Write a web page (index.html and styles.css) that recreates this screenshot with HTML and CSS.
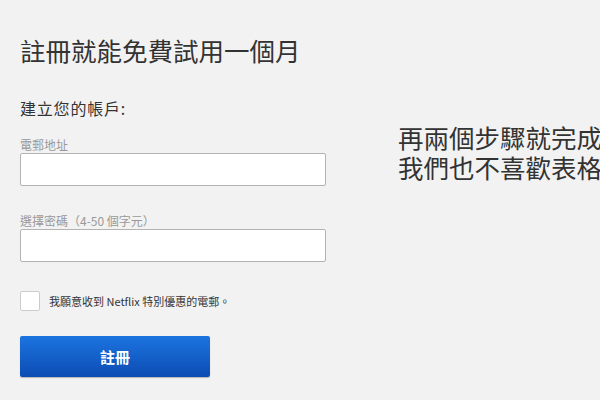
FILE: index.html
```html
<!doctype html>
<html lang="zh-Hant">
<head>
	<meta charset="UTF-8">
	<title>註冊</title>
	<link rel="stylesheet" href="styles.css">
</head>
<body>
	<div class="page">
		<div class="signup">
			<h1 class="title">註冊就能免費試用一個月</h1>
			<h2 class="subtitle">建立您的帳戶:</h2>
			<label class="field">
				<span class="field-label">電郵地址</span>
				<input class="field-input" type="text">
			</label>
			<label class="field field-pass">
				<span class="field-label">選擇密碼（4-50 個字元）</span>
				<input class="field-input" type="password">
			</label>
			<label class="opt-in">
				<span class="check"></span>
				<span class="opt-text">我願意收到 Netflix 特別優惠的電郵。</span>
			</label>
			<a class="btn" href="javascript:void(0);">註冊</a>
		</div>
		<div class="aside">
			<p>再兩個步驟就完成</p>
			<p>我們也不喜歡表格</p>
		</div>
	</div>
</body>
</html>
```

FILE: styles.css
```css
html, body {
	margin: 0;
	padding: 0;
	height: 100%;
	background-color: #f2f2f2;
	overflow: hidden;
}
body {
	font-family: "Noto Sans CJK TC", "Noto Sans", sans-serif;
	color: #333;
}
.page {
	display: flex;
	padding: 34px 0 0 20px;
}
.signup {
	width: 306px;
	flex-shrink: 0;
}
.title {
	margin: 0;
	font-size: 25.5px;
	font-weight: 400;
	line-height: 32px;
	color: #333;
}
.subtitle {
	margin: 32px 0 0;
	font-size: 16px;
	font-weight: 400;
	line-height: 20px;
	letter-spacing: 0.8px;
	color: #333;
}
.field {
	display: flex;
	flex-direction: column;
	margin-top: 19px;
}
.field-pass {
	margin-top: 27px;
}
.field-label {
	font-size: 12px;
	line-height: 16px;
	color: #999;
}
.field-input {
	box-sizing: border-box;
	width: 306px;
	height: 33px;
	margin: 0;
	border: 1px solid #b3b3b3;
	border-radius: 2px;
	background-color: #fff;
	outline: none;
}
.opt-in {
	display: flex;
	align-items: center;
	margin-top: 29px;
}
.check {
	box-sizing: border-box;
	width: 20px;
	height: 20px;
	border: 1px solid #ccc;
	border-radius: 2px;
	background-color: #fff;
}
.opt-text {
	margin-left: 9px;
	font-size: 11px;
	color: #333;
}
.btn {
	display: block;
	box-sizing: border-box;
	width: 190px;
	height: 41px;
	margin-top: 25px;
	border-radius: 2px;
	background: linear-gradient(#1c74e0, #0c4cb3);
	box-shadow: 0 1px 1px rgba(0,0,0,.25);
	color: #fff;
	font-size: 15px;
	font-weight: 700;
	line-height: 41px;
	text-align: center;
	text-decoration: none;
}
.aside {
	margin: 88px 0 0 72px;
	white-space: nowrap;
}
.aside p {
	margin: 0;
	font-size: 25.5px;
	line-height: 30px;
	color: #333;
}
```
